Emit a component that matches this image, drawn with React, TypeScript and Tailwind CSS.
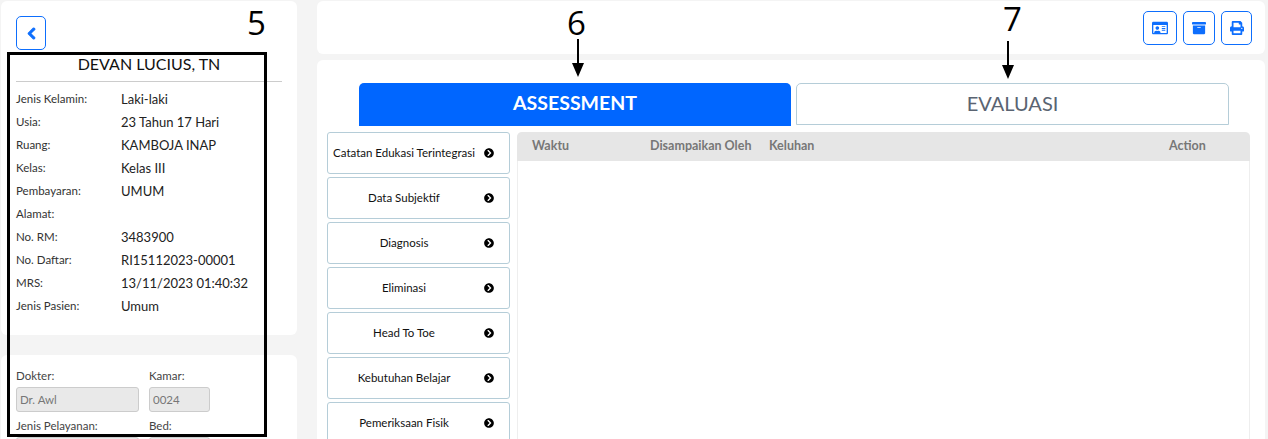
import { FaArchive, FaChevronCircleRight, FaChevronLeft, FaPrint, FaRegIdCard } from "react-icons/fa";

const patient = [
  ["Jenis Kelamin:", "Laki-laki"],
  ["Usia:", "23 Tahun 17 Hari"],
  ["Ruang:", "KAMBOJA INAP"],
  ["Kelas:", "Kelas III"],
  ["Pembayaran:", "UMUM"],
  ["Alamat:", ""],
  ["No. RM:", "3483900"],
  ["No. Daftar:", "RI15112023-00001"],
  ["MRS:", "13/11/2023 01:40:32"],
  ["Jenis Pasien:", "Umum"],
];

const menu = [
  "Catatan Edukasi Terintegrasi",
  "Data Subjektif",
  "Diagnosis",
  "Eliminasi",
  "Head To Toe",
  "Kebutuhan Belajar",
  "Pemeriksaan Fisik",
];

// Annotation arrow sitting on top of the screenshot
function Arrow({ className }: { className: string }) {
  return (
    <svg width="12" height="38" viewBox="0 0 12 38" className={`absolute ${className}`}>
      <path d="M5 0h2v24h5l-6 14-6-14h5z" fill="#000" />
    </svg>
  );
}

function Num({ num, className }: { num: string; className: string }) {
  return (
    <span className={`absolute font-['Open_Sans',sans-serif] text-[33px] leading-[36px] text-black ${className}`}>
      {num}
    </span>
  );
}

function Field({ label, value, width }: { label: string; value: string; width: string }) {
  return (
    <div className={width}>
      <div className="text-[11.5px] leading-[16px] text-[#444]">{label}</div>
      <div className="mt-[3px] h-[25px] rounded-[3px] border border-[#ccc] bg-[#e9e9e9] px-[3px] text-[11.5px] leading-[23px] text-[#777]">
        {value}
      </div>
    </div>
  );
}

export default function App() {
  return (
    <div className="relative flex h-[439px] w-[1268px] gap-5 overflow-hidden bg-[#f4f4f4] pl-[1px] pt-[1px] font-['Lato',sans-serif]">
      {/* Patient column */}
      <div className="flex w-[296px] shrink-0 flex-col gap-5">
        <div className="h-[334px] shrink-0 rounded-md bg-white px-[15px] pt-[15px]">
          <button className="flex h-[34px] w-[30px] items-center justify-center rounded-[5px] border border-[#0d6efd] text-[#0d6efd]">
            <FaChevronLeft size={13} stroke="currentColor" strokeWidth={40} />
          </button>
          <div className="mt-[2px] w-[266px] border-b border-[#ccc] pb-[5px] text-center text-[16px] leading-[24px] text-[#111]">
            DEVAN LUCIUS, TN
          </div>
          <div className="mt-[5px] flex flex-col">
            {patient.map(([label, value]) => (
              <div key={label} className="flex h-[23px] items-center">
                <span className="w-[105px] text-[11.5px] text-[#333]">{label}</span>
                <span className="mt-[2px] text-[13px] text-[#222]">{value}</span>
              </div>
            ))}
          </div>
        </div>
        <div className="flex-1 rounded-md bg-white px-[15px] pt-[13px]">
          <div className="flex gap-[10px]">
            <Field label="Dokter:" value="Dr. Awl" width="w-[123px]" />
            <Field label="Kamar:" value="0024" width="w-[61px]" />
          </div>
          <div className="mt-[6px] flex gap-[10px]">
            <Field label="Jenis Pelayanan:" value="" width="w-[123px]" />
            <Field label="Bed:" value="" width="w-[61px]" />
          </div>
        </div>
      </div>

      {/* Main column */}
      <div className="flex w-[948px] shrink-0 flex-col gap-[6px]">
        <div className="flex h-[53px] shrink-0 items-start justify-end gap-[6px] rounded-md bg-white pr-[13px] pt-[10px]">
          <button className="flex h-[34px] w-[34px] items-center justify-center rounded-[5px] border border-[#0d6efd] text-[#0d6efd]">
            <FaRegIdCard size={16} />
          </button>
          <button className="flex h-[34px] w-[32px] items-center justify-center rounded-[5px] border border-[#0d6efd] text-[#0d6efd]">
            <FaArchive size={14} />
          </button>
          <button className="flex h-[34px] w-[31px] items-center justify-center rounded-[5px] border border-[#0d6efd] text-[#0d6efd]">
            <FaPrint size={14} />
          </button>
        </div>
        <div className="flex-1 rounded-md bg-white pt-[23px]">
          <div className="ml-[42px] flex gap-[5px]">
            <div className="flex h-[43px] w-[432px] items-center justify-center rounded-t-[5px] bg-[#0066ff] pb-[3px] text-[19.5px] font-bold text-white">
              ASSESSMENT
            </div>
            <div className="flex h-[42px] w-[433px] items-center justify-center rounded-t-[5px] border border-[#b5cdd8] pb-[2px] text-[20px] text-[#5a6472]">
              EVALUASI
            </div>
          </div>
          <div className="ml-[10px] mt-[6px] flex gap-[7px]">
            <div className="flex w-[183px] flex-col gap-[3px]">
              {menu.map((item) => (
                <div
                  key={item}
                  className="flex h-[42px] shrink-0 items-center rounded-[3px] border border-[#b5cdd8] pr-[15px] text-[11.5px] text-[#111]"
                >
                  <span className="flex-1 text-center whitespace-nowrap">{item}</span>
                  <FaChevronCircleRight size={10} className="ml-[4px] shrink-0 text-black" />
                </div>
              ))}
            </div>
            <div className="h-[400px] w-[733px] rounded-t-[5px] border-x border-[#eee]">
              <div className="-mx-[1px] flex h-[29px] items-center rounded-t-[5px] bg-[#e6e6e6] text-[12.5px] font-bold text-[#777]">
                <span className="ml-[15px] w-[118px]">Waktu</span>
                <span className="w-[119px]">Disampaikan Oleh</span>
                <span className="w-[400px]">Keluhan</span>
                <span>Action</span>
              </div>
            </div>
          </div>
        </div>
      </div>

      {/* Annotations drawn over the page */}
      <div className="absolute left-[7px] top-[52px] h-[385px] w-[260px] border-[3px] border-black" />
      <Num num="5" className="left-[247px] top-[5px]" />
      <Num num="6" className="left-[567px] top-[5px]" />
      <Arrow className="left-[572px] top-[39px]" />
      <Num num="7" className="left-[1003px] top-[1px]" />
      <Arrow className="left-[1002px] top-[41px]" />
    </div>
  );
}
